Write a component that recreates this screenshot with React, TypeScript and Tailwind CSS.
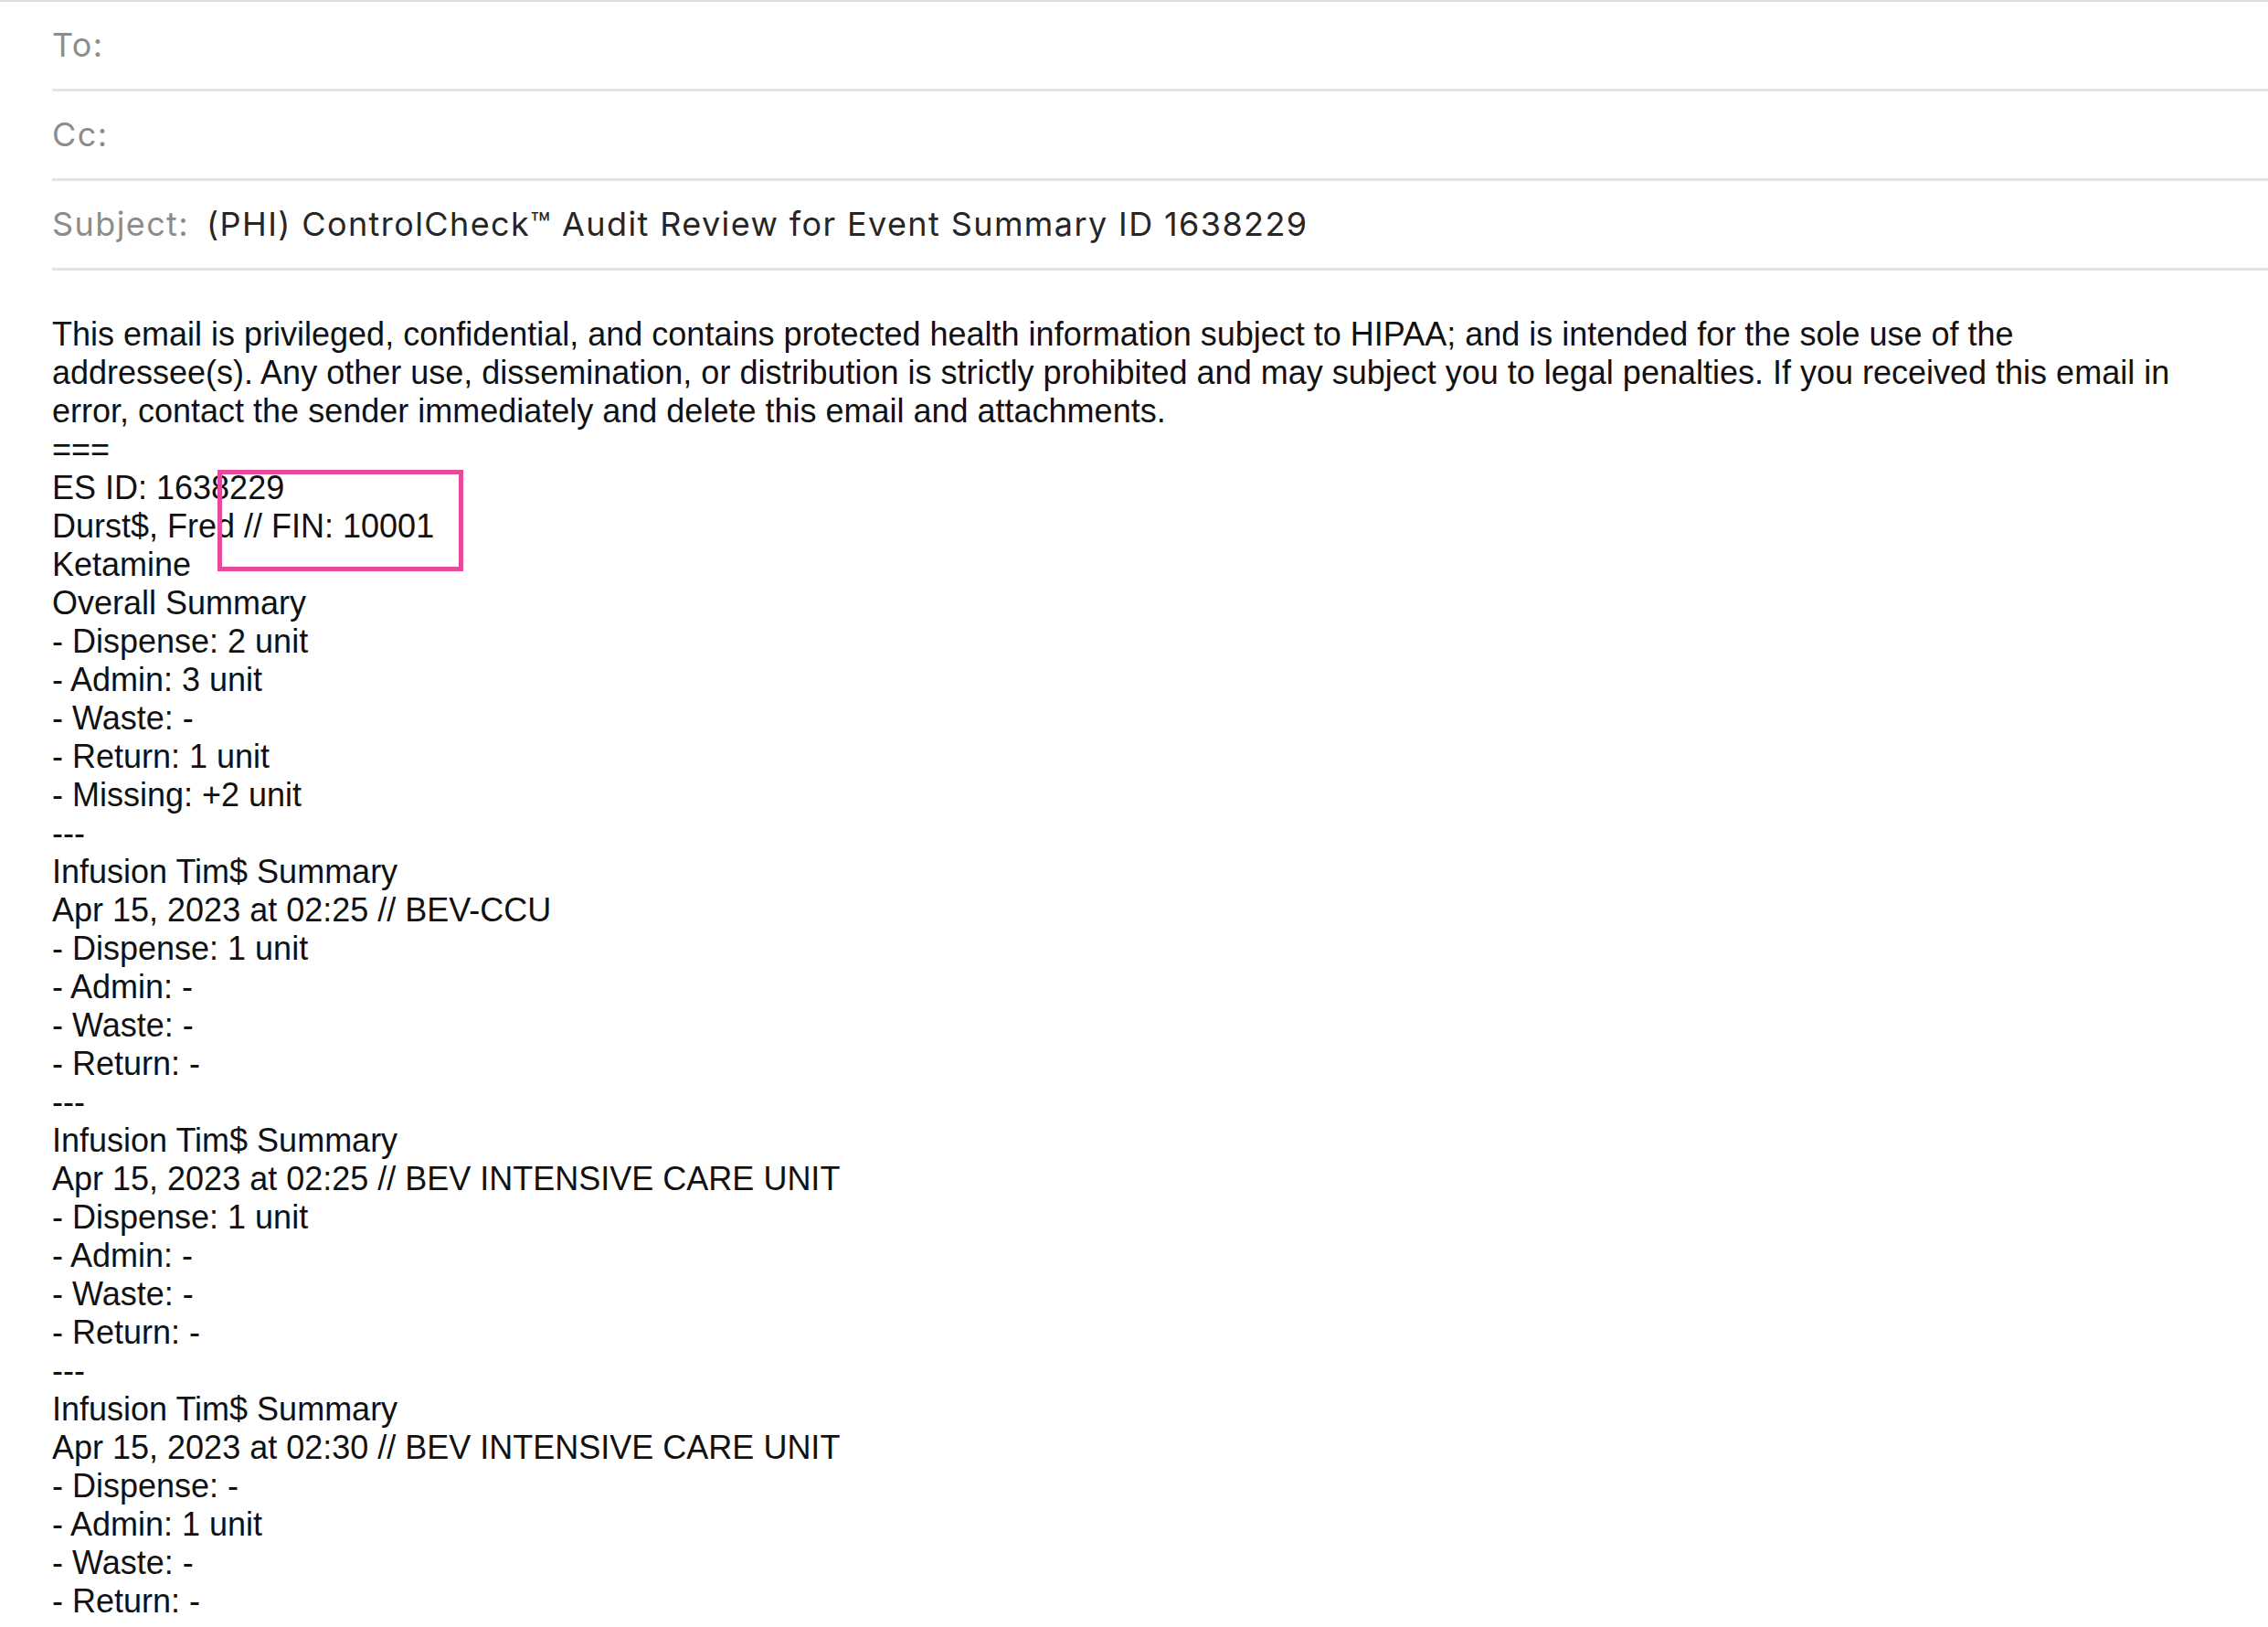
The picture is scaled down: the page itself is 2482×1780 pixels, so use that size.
const headerRows = [
  { label: 'To:', value: '' },
  { label: 'Cc:', value: '' },
  { label: 'Subject:', value: '(PHI) ControlCheck™ Audit Review for Event Summary ID 1638229' },
];

const disclaimer = [
  'This email is privileged, confidential, and contains protected health information subject to HIPAA; and is intended for the sole use of the',
  'addressee(s). Any other use, dissemination, or distribution is strictly prohibited and may subject you to legal penalties. If you received this email in',
  'error, contact the sender immediately and delete this email and attachments.',
];

const bodyLines = [
  '===',
  'ES ID: 1638229',
  'Durst$, Fred // FIN: 10001',
  'Ketamine',
  'Overall Summary',
  '- Dispense: 2 unit',
  '- Admin: 3 unit',
  '- Waste: -',
  '- Return: 1 unit',
  '- Missing: +2 unit',
  '---',
  'Infusion Tim$ Summary',
  'Apr 15, 2023 at 02:25 // BEV-CCU',
  '- Dispense: 1 unit',
  '- Admin: -',
  '- Waste: -',
  '- Return: -',
  '---',
  'Infusion Tim$ Summary',
  'Apr 15, 2023 at 02:25 // BEV INTENSIVE CARE UNIT',
  '- Dispense: 1 unit',
  '- Admin: -',
  '- Waste: -',
  '- Return: -',
  '---',
  'Infusion Tim$ Summary',
  'Apr 15, 2023 at 02:30 // BEV INTENSIVE CARE UNIT',
  '- Dispense: -',
  '- Admin: 1 unit',
  '- Waste: -',
  '- Return: -',
];

export default function App() {
  return (
    <div className="min-h-screen bg-white border-t-2 border-[#dcdcdc]">
      {/* header fields */}
      <div className="pl-[57px] font-['Inter','Liberation_Sans',sans-serif]">
        {headerRows.map((row) => (
          <div
            key={row.label}
            className="h-[98px] pb-[2px] flex items-center border-b-[3px] border-[#e4e4e4] text-[36px] tracking-[1.4px]"
          >
            <span className="text-[#8c8c8c]">{row.label}</span>
            {row.value && <span className="ml-[19px] text-[#262626]">{row.value}</span>}
          </div>
        ))}
      </div>

      {/* message body */}
      <div className="relative pl-[57px] mt-[49px] text-[36px] leading-[42px] text-[#111111] font-['Liberation_Sans',Arial,sans-serif] whitespace-nowrap">
        {disclaimer.map((line, i) => (
          <div key={`d${i}`}>{line}</div>
        ))}
        {bodyLines.map((line, i) => (
          <div key={i}>{line}</div>
        ))}

        {/* highlight box */}
        <div className="absolute left-[238px] top-[169px] w-[269px] h-[111px] border-[5px] border-[#e84a9b]" />
      </div>
    </div>
  );
}
